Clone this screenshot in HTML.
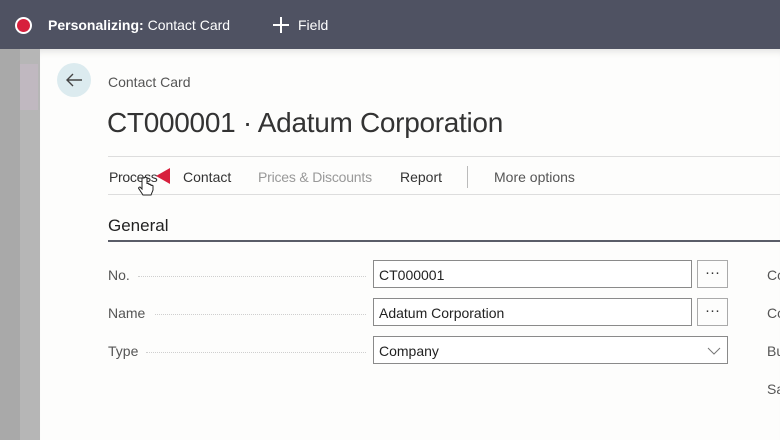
<!DOCTYPE html>
<html><head><style>
*{margin:0;padding:0;box-sizing:border-box}
body{width:780px;height:440px;overflow:hidden;background:#fff;font-family:"Liberation Sans",sans-serif;position:relative}
.top{position:absolute;left:0;top:0;width:780px;height:49px;background:#4f5262}
.dot{position:absolute;left:15px;top:17px;width:17px;height:17px;border-radius:50%;background:#fff}
.dot:after{content:"";position:absolute;left:2px;top:2px;width:13px;height:13px;border-radius:50%;background:#d7203d}
.t1{position:absolute;left:48px;top:17px;color:#fff;font-size:14px}
.t2{position:absolute;left:298px;top:17px;color:#fff;font-size:14px}
.plus{position:absolute;left:273px;top:17px;width:16px;height:16px}
.plus:before,.plus:after{content:"";position:absolute;background:#fff}
.plus:before{left:7px;top:0;width:2px;height:16px}
.plus:after{left:0;top:7px;width:16px;height:2px}
.s1{position:absolute;left:0;top:49px;width:20px;height:391px;background:#a9a9a9}
.s2{position:absolute;left:20px;top:49px;width:20px;height:391px;background:#b6b6b6}
.pink{position:absolute;left:20px;top:64px;width:18px;height:46px;background:#c0b8c0}
.panel{position:absolute;left:40px;top:49px;width:740px;height:391px;background:#fdfdfc;box-shadow:inset 0 8px 8px -6px rgba(0,0,0,.12)}
.back{position:absolute;left:57px;top:63px;width:34px;height:34px;border-radius:50%;background:#dcebef}
.abs{position:absolute;white-space:nowrap}
.dots{position:absolute;top:0;height:1px;border-top:1px dotted #cfcfcf}
.inp{position:absolute;border:1px solid #8a8a8a;background:#fff;height:28px;font-size:14px;color:#222;padding:6px 5px}
.btn{position:absolute;border:1px solid #aaa;width:24px;height:28px;font-size:15px;color:#333;text-align:center;line-height:24px}
.lab{font-size:14px;color:#555}
</style></head><body>
<div class="top"></div>
<div class="dot"></div>
<div class="t1"><b>Personalizing:</b> Contact Card</div>
<div class="plus"></div>
<div class="t2">Field</div>
<div class="s1"></div><div class="s2"></div><div class="pink"></div>
<div class="panel"></div>
<div class="back"></div>
<svg class="abs" style="left:64px;top:71px" width="20" height="18"><path d="M18 9H3M9 3L3 9l6 6" stroke="#444" stroke-width="1.4" fill="none"/></svg>
<div class="abs" style="left:108px;top:74px;font-size:14px;color:#555">Contact Card</div>
<div class="abs" style="left:107px;top:107px;font-size:28px;color:#333;letter-spacing:-0.3px">CT000001 · Adatum Corporation</div>
<div class="abs" style="left:108px;top:156px;width:672px;height:1px;background:#ddd"></div>
<div class="abs" style="left:108px;top:194px;width:672px;height:1px;background:#ddd"></div>
<div class="abs" style="left:109px;top:169px;font-size:14px;color:#333;letter-spacing:-0.3px">Process</div>
<svg class="abs" style="left:156px;top:168px" width="14" height="16"><path d="M14 0V16L0 8Z" fill="#d7203d"/></svg>
<div class="abs" style="left:183px;top:169px;font-size:14px;color:#333">Contact</div>
<div class="abs" style="left:258px;top:169px;font-size:14px;color:#999;letter-spacing:-0.2px">Prices &amp; Discounts</div>
<div class="abs" style="left:400px;top:169px;font-size:14px;color:#333">Report</div>
<div class="abs" style="left:467px;top:166px;width:1px;height:22px;background:#bbb"></div>
<div class="abs" style="left:494px;top:169px;font-size:14px;color:#555">More options</div>
<svg class="abs" style="left:138px;top:176px" width="16" height="22"><path d="M4 2v11l-2-2c-1 0-2 1-1 2l4 6h8l2-5v-4c0-1-2-1-2 0v-1c0-1-2-1-2 0v-1c0-1-2-1-2 0V2c0-1-3-1-3 0z" fill="#fff" stroke="#222"/></svg>
<div class="abs" style="left:108px;top:216px;font-size:17px;color:#222">General</div>
<div class="abs" style="left:108px;top:240px;width:672px;height:2px;background:#5a5d68"></div>
<div class="abs lab" style="left:108px;top:267px">No.</div>
<div class="abs lab" style="left:108px;top:305px">Name</div>
<div class="abs lab" style="left:108px;top:343px">Type</div>
<div class="dots" style="left:138px;top:276px;width:228px"></div>
<div class="dots" style="left:155px;top:314px;width:211px"></div>
<div class="dots" style="left:146px;top:352px;width:220px"></div>
<div class="inp" style="left:373px;top:260px;width:319px">CT000001</div>
<div class="inp" style="left:373px;top:298px;width:319px">Adatum Corporation</div>
<div class="inp" style="left:373px;top:336px;width:355px">Company</div>
<svg class="abs" style="left:707px;top:347px" width="14" height="8"><path d="M1 1l6 6 6-6" stroke="#777" fill="none"/></svg>
<div class="btn" style="left:697px;top:260px;width:31px">···</div>
<div class="btn" style="left:697px;top:298px;width:31px">···</div>
<div class="abs lab" style="left:767px;top:267px">Co</div>
<div class="abs lab" style="left:767px;top:305px">Co</div>
<div class="abs lab" style="left:767px;top:343px">Bu</div>
<div class="abs lab" style="left:767px;top:381px">Sa</div>
</body></html>
